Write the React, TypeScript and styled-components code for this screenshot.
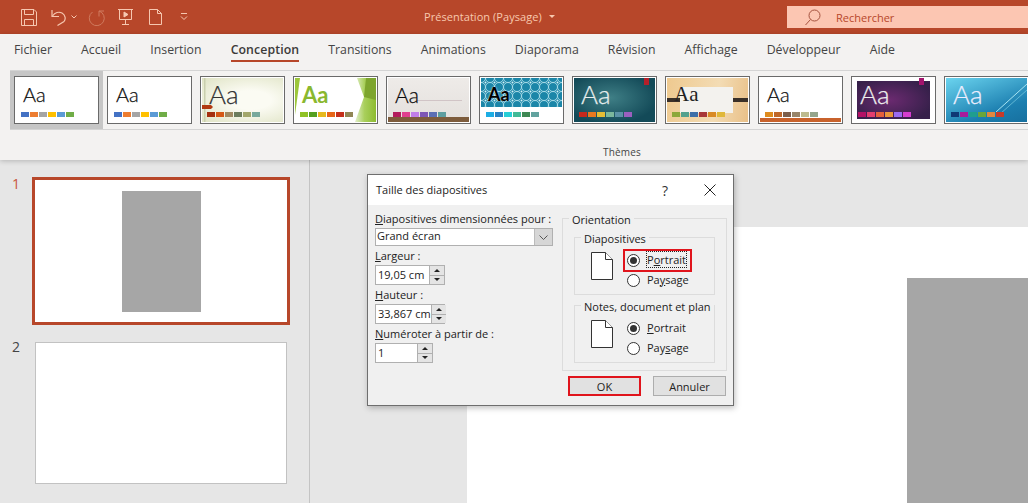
import React from "react";
import styled, { createGlobalStyle } from "styled-components";

const Global = createGlobalStyle`
  html, body { margin: 0; padding: 0; background: #e6e6e6; overflow: hidden; }
  *, *::before, *::after { box-sizing: border-box; }
`;

const FONT = `"Open Sans", "Noto Sans", "Liberation Sans", sans-serif`;

const Page = styled.div`
  position: relative;
  width: 1028px;
  height: 503px;
  overflow: hidden;
  display: flex;
  flex-direction: column;
  font-family: ${FONT};
  background: #e6e6e6;
`;

const TitleBar = styled.header`
  height: 34px;
  flex: none;
  background: #b7472a;
  display: flex;
  align-items: center;
  position: relative;
  padding-left: 21px;
`;
const QuickIcons = styled.div`
  display: flex;
  align-items: center;
  width: 403px;
  flex: none;
`;
const QuickIcon = styled.svg<{ $mr: number }>`
  flex: none;
  margin-right: ${(p) => p.$mr}px;
  fill: none;
  stroke: #f6c7b0;
  stroke-width: 1;
`;
const DocTitle = styled.div`
  width: 363px;
  flex: none;
  display: flex;
  align-items: center;
  gap: 7px;
  padding-bottom: 2px;
  font-size: 11px;
  color: #f8c9ae;
  letter-spacing: 0.05px;
`;
const Caret = styled.span`
  width: 0;
  height: 0;
  border-left: 3px solid transparent;
  border-right: 3px solid transparent;
  border-top: 3px solid #f8c9ae;
`;
const SearchBox = styled.div`
  height: 22px;
  flex: 1;
  background: #fcc6b2;
  display: flex;
  align-items: center;
  padding-left: 18px;
  gap: 15px;
  font-size: 11px;
  color: #b7472a;
`;

const Ribbon = styled.section`
  height: 126px;
  flex: none;
  background: #f3f2f1;
  box-shadow: 0 1px 5px rgba(0, 0, 0, 0.22);
  position: relative;
  z-index: 1;
  display: flex;
  flex-direction: column;
`;
const TabBar = styled.nav`
  height: 36px;
  flex: none;
  display: flex;
  padding-left: 14px;
  gap: 29.1px;
`;
const Tab = styled.div<{ $active?: boolean }>`
  height: 28px;
  padding-top: 6.5px;
  font-size: 12.3px;
  line-height: 18px;
  color: ${(p) => (p.$active ? "#3b3a39" : "#444")};
  font-weight: ${(p) => (p.$active ? 600 : 400)};
  letter-spacing: ${(p) => (p.$active ? "0.1px" : "0")};
  border-bottom: ${(p) => (p.$active ? "2px solid #b7472a" : "0")};
`;
const Gallery = styled.div`
  margin-left: 10px;
  height: 60px;
  flex: none;
  border-top: 1px solid #d4d4d4;
  border-bottom: 1px solid #d4d4d4;
  display: flex;
`;
const ThemeSlot = styled.div<{ $selected?: boolean }>`
  width: 93px;
  flex: none;
  padding: 5px 4px 4px;
  background: ${(p) => (p.$selected ? "#c6c6c6" : "transparent")};
`;
const ThemeCard = styled.div`
  width: 85px;
  height: 48px;
  border: 1px solid #6a6a6a;
  background: #fff;
  padding: 1px;
`;
const Thumb = styled.div<{ $bg: string }>`
  position: relative;
  width: 100%;
  height: 100%;
  background: ${(p) => p.$bg};
  overflow: hidden;
  padding: 3px 0 0 5px;
  display: flex;
  flex-direction: column;
`;
const Aa = styled.div<{ $color: string; $size: number; $serif?: boolean; $bold?: boolean; $halo?: boolean }>`
  position: relative;
  height: 27px;
  margin-left: 2px;
  font-family: ${(p) => (p.$serif ? `"Liberation Serif", serif` : `"Lato", "Noto Sans", sans-serif`)};
  font-size: ${(p) => p.$size}px;
  line-height: 27px;
  font-weight: ${(p) => (p.$bold ? 700 : p.$serif ? 400 : 300)};
  color: ${(p) => p.$color};
  -webkit-text-stroke: ${(p) => (p.$bold || p.$serif ? "0" : "0.25px currentColor")};
  text-shadow: ${(p) => (p.$halo ? "0 0 2px #fff" : "none")};
`;
const Swatches = styled.div`
  position: relative;
  display: flex;
  gap: 1px;
  margin-top: 4px;
`;
const Swatch = styled.span<{ $c: string }>`
  width: 8px;
  height: 5px;
  background: ${(p) => p.$c};
`;
const RibbonGroupLabel = styled.div`
  text-align: center;
  padding: 15px 0 0 216px;
  font-size: 10px;
  line-height: 14px;
  color: #444;
  letter-spacing: 0.2px;
`;

const Workspace = styled.div`
  flex: 1;
  display: flex;
  min-height: 0;
`;
const Sidebar = styled.aside`
  width: 310px;
  flex: none;
  border-right: 1px solid #c4c4c4;
  padding: 17px 0 0 0;
  display: flex;
  flex-direction: column;
  gap: 17px;
`;
const SlideRow = styled.div`
  display: flex;
`;
const SlideNumber = styled.div<{ $active?: boolean }>`
  width: 32px;
  padding-left: 12px;
  margin-top: ${(p) => (p.$active ? 0 : -2)}px;
  font-size: 14px;
  line-height: 14px;
  color: ${(p) => (p.$active ? "#c8553a" : "#444")};
`;
const SlideThumb = styled.div<{ $active?: boolean }>`
  width: ${(p) => (p.$active ? 258 : 252)}px;
  height: ${(p) => (p.$active ? 148 : 142)}px;
  margin-left: ${(p) => (p.$active ? 0 : 3)}px;
  background: #fff;
  border: ${(p) => (p.$active ? "3px solid #b7472a" : "1px solid #c2c2c2")};
  display: flex;
  justify-content: center;
  padding-top: 11px;
  padding-left: 1px;
`;
const ThumbShape = styled.div`
  width: 79px;
  height: 121px;
  background: #a6a6a6;
`;
const Canvas = styled.main`
  flex: 1;
  display: flex;
  padding: 67px 0 0 157px;
`;
const Slide = styled.div`
  flex: 1;
  display: flex;
  background: #fff;
  padding: 51px 0 0 440px;
`;
const SlideShape = styled.div`
  flex: 1;
  background: #a6a6a6;
`;

const Dialog = styled.div`
  position: absolute;
  left: 367px;
  top: 174px;
  width: 367px;
  height: 232px;
  z-index: 2;
  background: #f0f0f0;
  border: 1px solid #6e6e6e;
  box-shadow: 1px 2px 6px rgba(0, 0, 0, 0.25);
  font-size: 11px;
  color: #222;
  display: flex;
  flex-direction: column;
`;
const DialogHeader = styled.div`
  height: 30px;
  flex: none;
  background: #fff;
  display: flex;
  align-items: center;
  padding: 0 17px 0 8px;
`;
const DialogTitle = styled.div`
  flex: 1;
  padding-bottom: 1px;
`;
const Help = styled.div`
  width: 42px;
  font-size: 14px;
  color: #333;
`;
const DialogBody = styled.div`
  flex: 1;
  display: flex;
  padding: 7px 0 0 7px;
`;
const LeftCol = styled.div`
  width: 178px;
  flex: none;
  display: flex;
  flex-direction: column;
`;
const FieldLabel = styled.label`
  display: block;
  height: 16px;
  line-height: 14px;
  white-space: nowrap;
`;
const FieldGap = styled.div`
  height: 3px;
`;
const Select = styled.div`
  height: 18px;
  background: #fff;
  border: 1px solid #b0b0b0;
  display: flex;
  align-items: center;
  padding-left: 1px;
`;
const SelectValue = styled.span`
  flex: 1;
  line-height: 14px;
  padding-bottom: 2px;
`;
const SelectButton = styled.span`
  width: 18px;
  height: 16px;
  background: #d6d6d6;
  border-left: 1px solid #bbb;
  display: flex;
  align-items: center;
  justify-content: center;
`;
const Spin = styled.div<{ $w: number }>`
  width: ${(p) => p.$w}px;
  height: 20px;
  background: #fff;
  border: 1px solid #b0b0b0;
  display: flex;
  align-items: stretch;
  padding-left: 2px;
`;
const SpinValue = styled.span`
  flex: 1;
  line-height: 18px;
  white-space: nowrap;
`;
const SpinButtons = styled.span`
  width: 15px;
  flex: none;
  display: flex;
  flex-direction: column;
  border-left: 1px solid #b0b0b0;
  background: #e4e4e4;
`;
const SpinArrow = styled.span<{ $down?: boolean }>`
  flex: 1;
  display: flex;
  align-items: center;
  justify-content: center;
  border-top: ${(p) => (p.$down ? "1px solid #b0b0b0" : "0")};
  &::after {
    content: "";
    width: 6px;
    height: 3px;
    border-left: 3px solid transparent;
    border-right: 3px solid transparent;
    ${(p) => (p.$down ? "border-top: 3px solid #222;" : "border-bottom: 3px solid #222;")}
  }
`;
const RightCol = styled.div`
  margin-top: 6px;
  margin-left: 9px;
  width: 165px;
  flex: none;
  display: flex;
  flex-direction: column;
`;
const OuterGroup = styled.div`
  position: relative;
  height: 153px;
  border: 1px solid #dcdcdc;
  padding: 18px 11px 0;
  display: flex;
  flex-direction: column;
  gap: 10px;
`;
const Legend = styled.span<{ $left: number }>`
  position: absolute;
  top: -7px;
  left: ${(p) => p.$left}px;
  padding: 0 3px;
  line-height: 15px;
  background: #f0f0f0;
  white-space: nowrap;
`;
const InnerGroup = styled.div`
  position: relative;
  height: 58px;
  flex: none;
  border: 1px solid #dcdcdc;
  display: flex;
  padding: 14px 0 0 16px;
`;
const PageIcon = styled.svg`
  flex: none;
  fill: #fff;
  stroke: #333;
  stroke-width: 1;
`;
const RadioList = styled.div`
  margin-left: 14px;
  margin-top: -2px;
  display: flex;
  flex-direction: column;
`;
const RadioRow = styled.div<{ $highlight?: boolean }>`
  position: relative;
  height: 20px;
  display: flex;
  align-items: center;
  gap: 7px;
  white-space: nowrap;
  &::before {
    content: "";
    display: ${(p) => (p.$highlight ? "block" : "none")};
    position: absolute;
    left: -4px;
    top: -1px;
    width: 69px;
    height: 23px;
    border: 2px solid #e0141c;
  }
`;
const Radio = styled.span<{ $on?: boolean }>`
  width: 13px;
  height: 13px;
  flex: none;
  border-radius: 50%;
  border: 1px solid #333;
  background: #fff;
  display: flex;
  align-items: center;
  justify-content: center;
  &::after {
    content: "";
    display: ${(p) => (p.$on ? "block" : "none")};
    width: 7px;
    height: 7px;
    border-radius: 50%;
    background: #333;
  }
`;
const Focused = styled.span<{ $focus?: boolean }>`
  outline: ${(p) => (p.$focus ? "1px dotted #222" : "0")};
  line-height: 15px;
  margin-bottom: 2px;
`;
const Footer = styled.div`
  position: absolute;
  left: 200px;
  top: 201px;
  display: flex;
  gap: 12px;
`;
const Button = styled.button<{ $primary?: boolean }>`
  width: 73px;
  height: 20px;
  padding: 0;
  font-family: inherit;
  font-size: 11px;
  color: #222;
  background: #e1e1e1;
  border: ${(p) => (p.$primary ? "2px solid #e0141c" : "1px solid #adadad")};
`;

const OFFICE = ["#4472c4", "#ed7d31", "#a5a5a5", "#ffc000", "#5b9bd5", "#70ad47"];

type ThemeDef = {
  bg: string;
  aa: string;
  size: number;
  colors: string[];
  serif?: boolean;
  bold?: boolean;
  halo?: boolean;
  deco?: React.ReactNode;
};

const decoStyle: React.CSSProperties = { position: "absolute", inset: 0 };

const themes: ThemeDef[] = [
  { bg: "#fff", aa: "#111", size: 20, colors: OFFICE },
  { bg: "#fff", aa: "#111", size: 20, colors: OFFICE },
  {
    bg: "radial-gradient(ellipse at 60% 50%, #fbfbf3 30%, #dfe3c4 100%)",
    aa: "#333",
    size: 26,
    colors: ["#a5300f", "#d55816", "#a08a62", "#6b7c5c", "#a2a76b", "#78a99c"],
    deco: (
      <svg viewBox="0 0 81 44" width="81" height="44" style={decoStyle}>
        <path d="M2 0h1.500v44H2z" fill="#c9cfae" />
        <path d="M0 27h9l2 2-2 2H0z" fill="#b23a12" />
      </svg>
    ),
  },
  {
    bg: "#fff",
    aa: "#8ab82f",
    size: 22,
    bold: true,
    colors: ["#90c226", "#54a021", "#e6b91e", "#e76618", "#c42f1a", "#918655"],
    deco: (
      <svg viewBox="0 0 81 44" width="81" height="44" style={decoStyle}>
        <defs>
          <linearGradient id="leaf" x1="0" y1="0" x2="1" y2="0">
            <stop offset="0%" stopColor="#e2efcb" />
            <stop offset="45%" stopColor="#a9cf5c" />
            <stop offset="100%" stopColor="#8cbb30" />
          </linearGradient>
        </defs>
        <path d="M0 0h5L0 37z" fill="#9cc63b" />
        <path d="M62 0L69 19 60 44H81V0z" fill="url(#leaf)" />
        <path d="M71 0H81V22L69 19z" fill="#7da52e" />
      </svg>
    ),
  },
  {
    bg: "linear-gradient(180deg,#eeebe8,#e4e0dd)",
    aa: "#0a0a0a",
    size: 21,
    colors: ["#b31c5c", "#e03f8f", "#c17ee8", "#7e57b5", "#5b6fb5", "#5e9ea0"],
    deco: (
      <svg viewBox="0 0 81 44" width="81" height="44" style={decoStyle}>
        <path d="M29 22h45v.7H29z" fill="#c9b8bc" />
        <path d="M0 39h81v5H0z" fill="#7d5c3c" />
      </svg>
    ),
  },
  {
    bg: "#fff",
    aa: "#000",
    size: 18,
    bold: true,
    halo: true,
    colors: ["#1cade4", "#2683c6", "#27ced7", "#42ba97", "#3e8853", "#62a39f"],
    deco: (
      <svg viewBox="0 0 81 44" width="81" height="44" style={decoStyle}>
        <defs>
          <pattern id="tile" width="9" height="9" patternUnits="userSpaceOnUse">
            <rect width="9" height="9" fill="#1b86a8" />
            <circle cx="0" cy="0" r="4.500" fill="none" stroke="#a8dbe8" strokeWidth=".9" />
            <circle cx="9" cy="0" r="4.500" fill="none" stroke="#a8dbe8" strokeWidth=".9" />
            <circle cx="0" cy="9" r="4.500" fill="none" stroke="#a8dbe8" strokeWidth=".9" />
            <circle cx="9" cy="9" r="4.500" fill="none" stroke="#a8dbe8" strokeWidth=".9" />
            <circle cx="4.500" cy="4.500" r="1" fill="#d6eff5" />
          </pattern>
        </defs>
        <rect width="81" height="29" fill="url(#tile)" />
      </svg>
    ),
  },
  {
    bg: "radial-gradient(ellipse at 45% 45%, #3f7f86 0%, #134a58 75%)",
    aa: "#e8eeee",
    size: 26,
    colors: ["#c5291d", "#e8781f", "#e5bd35", "#7bb79c", "#5b92a6", "#9b5fbf"],
    deco: (
      <svg viewBox="0 0 81 44" width="81" height="44" style={decoStyle}>
        <path d="M70 0h5v7h-5z" fill="#b3202a" />
      </svg>
    ),
  },
  {
    bg: "linear-gradient(100deg,#eec98f,#f3dcb4 60%,#e9c088)",
    aa: "#222",
    size: 21,
    serif: true,
    colors: ["#8ca83a", "#53a18e", "#3d6fa8", "#a93838", "#d98a25", "#e0b83a"],
    deco: (
      <svg viewBox="0 0 81 44" width="81" height="44" style={decoStyle}>
        <rect x="13" y="9" width="53" height="26" fill="#f3f2ee" />
        <path d="M0 20h13v4H0zM66 20h15v4H66z" fill="#3a3028" />
      </svg>
    ),
  },
  {
    bg: "#fff",
    aa: "#111",
    size: 20,
    colors: ["#df8c1f", "#c0682a", "#7c5f4c", "#97856a", "#bdbb8f", "#94a58c"],
    deco: (
      <svg viewBox="0 0 81 44" width="81" height="44" style={decoStyle}>
        <rect y="40" width="81" height="4" fill="#c8622c" />
      </svg>
    ),
  },
  {
    bg: "#fff",
    aa: "#eee",
    size: 26,
    colors: ["#b31166", "#e33d6f", "#e45f3c", "#e9943a", "#9b6bf2", "#d53dd0"],
    deco: (
      <svg viewBox="0 0 81 44" width="81" height="44" style={decoStyle}>
        <defs>
          <radialGradient id="purple" cx="45%" cy="50%" r="60%">
            <stop offset="0%" stopColor="#6b2a70" />
            <stop offset="100%" stopColor="#36204a" />
          </radialGradient>
        </defs>
        <rect x="4" y="3" width="73" height="38" fill="url(#purple)" />
        <rect x="66" y="0" width="5" height="7" fill="#a3146d" />
      </svg>
    ),
  },
  {
    bg: "linear-gradient(160deg,#6bd4ef,#1c7fb0 70%,#17709f)",
    aa: "#eef",
    size: 26,
    colors: ["#0f3875", "#a81b9b", "#1f9e8e", "#6aa63a", "#e08840", "#c83a2a"],
    deco: (
      <svg viewBox="0 0 81 44" width="81" height="44" style={decoStyle}>
        <path d="M50 34L81 6" stroke="#a8e4f2" strokeWidth="1" />
        <path d="M54 36L81 12" stroke="#8ad6ea" strokeWidth=".6" />
      </svg>
    ),
  },
];

const tabs = [
  "Fichier",
  "Accueil",
  "Insertion",
  "Conception",
  "Transitions",
  "Animations",
  "Diaporama",
  "Révision",
  "Affichage",
  "Développeur",
  "Aide",
];

function PageGlyph() {
  return (
    <PageIcon width="22" height="28" viewBox="0 0 22 28">
      <path d="M.5.5h14l7 7v20H.5z" />
      <path d="M14.500.5v7h7" />
    </PageIcon>
  );
}

export default function App() {
  return (
    <Page>
      <Global />
      <TitleBar>
        <QuickIcons>
          <QuickIcon $mr={14} width="16" height="17" viewBox="0 0 16 17">
            <path d="M.5.5h12.500l2.500 2.500v13.500H.5z" />
            <path d="M3.500.5v5h9v-5M3.500 16.500v-6h9v6" />
          </QuickIcon>
          <QuickIcon $mr={4} width="16" height="17" viewBox="0 0 16 17">
            <path d="M1 1v6.500h7" strokeWidth="1.2" />
            <path d="M1.500 7C4 3.500 8 2.500 11 4c3.500 2 4 6 2 8.500L6.500 16.500" strokeWidth="1.2" />
          </QuickIcon>
          <QuickIcon $mr={11} width="6" height="4" viewBox="0 0 6 4">
            <path d="M.5.5L3 3 5.500.5" />
          </QuickIcon>
          <QuickIcon $mr={13} width="17" height="17" viewBox="0 0 17 17" style={{ stroke: "#cf7a5e" }}>
            <path d="M11 2a7.500 7.500 0 1 1-6.500 1M11 2V7.500M11 2H16" />
          </QuickIcon>
          <QuickIcon $mr={16} width="15" height="16" viewBox="0 0 15 16">
            <path d="M0 .5h15M1.500.5v10h12V.5M7.500 10.500v5M4 15.500h7" />
            <path d="M6 3v5l4-2.500z" fill="#f6c7b0" />
          </QuickIcon>
          <QuickIcon $mr={18} width="13" height="16" viewBox="0 0 13 16">
            <path d="M.5.5h8l4 4v11H.5z" />
            <path d="M8.500.5v4h4" />
          </QuickIcon>
          <QuickIcon $mr={0} width="8" height="8" viewBox="0 0 8 8">
            <path d="M1 .5h6M1 3.500L4 6.500 7 3.500" />
          </QuickIcon>
        </QuickIcons>
        <DocTitle>
          Présentation (Paysage)
          <Caret />
        </DocTitle>
        <SearchBox>
          <svg width="16" height="17" viewBox="0 0 16 17" fill="none" stroke="#a5533f" strokeWidth="1">
            <circle cx="9.500" cy="6.500" r="5.500" />
            <path d="M5.500 10.500L.5 16" />
          </svg>
          Rechercher
        </SearchBox>
      </TitleBar>

      <Ribbon>
        <TabBar>
          {tabs.map((t) => (
            <Tab key={t} $active={t === "Conception"}>
              {t}
            </Tab>
          ))}
        </TabBar>
        <Gallery>
          {themes.map((t, i) => (
            <ThemeSlot key={i} $selected={i === 0}>
              <ThemeCard>
                <Thumb $bg={t.bg}>
                  {t.deco}
                  <Aa $color={t.aa} $size={t.size} $serif={t.serif} $bold={t.bold} $halo={t.halo}>
                    Aa
                  </Aa>
                  <Swatches>
                    {t.colors.map((c, j) => (
                      <Swatch key={j} $c={c} />
                    ))}
                  </Swatches>
                </Thumb>
              </ThemeCard>
            </ThemeSlot>
          ))}
        </Gallery>
        <RibbonGroupLabel>Thèmes</RibbonGroupLabel>
      </Ribbon>

      <Workspace>
        <Sidebar>
          <SlideRow>
            <SlideNumber $active>1</SlideNumber>
            <SlideThumb $active>
              <ThumbShape />
            </SlideThumb>
          </SlideRow>
          <SlideRow>
            <SlideNumber>2</SlideNumber>
            <SlideThumb />
          </SlideRow>
        </Sidebar>
        <Canvas>
          <Slide>
            <SlideShape />
          </Slide>
        </Canvas>
      </Workspace>

      <Dialog>
        <DialogHeader>
          <DialogTitle>Taille des diapositives</DialogTitle>
          <Help>?</Help>
          <svg width="12" height="12" viewBox="0 0 12 12" stroke="#222" strokeWidth="1">
            <path d="M.5.5l11 11M11.500.5l-11 11" />
          </svg>
        </DialogHeader>
        <DialogBody>
          <LeftCol>
            <FieldLabel>
              <u>D</u>iapositives dimensionnées pour :
            </FieldLabel>
            <Select>
              <SelectValue>Grand écran</SelectValue>
              <SelectButton>
                <svg width="9" height="5" viewBox="0 0 9 5" fill="none" stroke="#555">
                  <path d="M.5.5l4 4 4-4" />
                </svg>
              </SelectButton>
            </Select>
            <FieldGap />
            <FieldLabel>
              <u>L</u>argeur :
            </FieldLabel>
            <Spin $w={70}>
              <SpinValue>19,05 cm</SpinValue>
              <SpinButtons>
                <SpinArrow />
                <SpinArrow $down />
              </SpinButtons>
            </Spin>
            <FieldGap />
            <FieldLabel>
              <u>H</u>auteur :
            </FieldLabel>
            <Spin $w={70}>
              <SpinValue>33,867 cm</SpinValue>
              <SpinButtons>
                <SpinArrow />
                <SpinArrow $down />
              </SpinButtons>
            </Spin>
            <FieldGap />
            <FieldLabel>
              <u>N</u>uméroter à partir de :
            </FieldLabel>
            <Spin $w={58}>
              <SpinValue>1</SpinValue>
              <SpinButtons>
                <SpinArrow />
                <SpinArrow $down />
              </SpinButtons>
            </Spin>
          </LeftCol>
          <RightCol>
            <OuterGroup>
              <Legend $left={6}>Orientation</Legend>
              <InnerGroup>
                <Legend $left={6}>Diapositives</Legend>
                <PageGlyph />
                <RadioList>
                  <RadioRow $highlight>
                    <Radio $on />
                    <Focused $focus>
                      P<u>o</u>rtrait
                    </Focused>
                  </RadioRow>
                  <RadioRow>
                    <Radio />
                    <Focused>
                      Pa<u>y</u>sage
                    </Focused>
                  </RadioRow>
                </RadioList>
              </InnerGroup>
              <InnerGroup>
                <Legend $left={6}>Notes, document et plan</Legend>
                <PageGlyph />
                <RadioList>
                  <RadioRow>
                    <Radio $on />
                    <Focused>
                      <u>P</u>ortrait
                    </Focused>
                  </RadioRow>
                  <RadioRow>
                    <Radio />
                    <Focused>
                      Pay<u>s</u>age
                    </Focused>
                  </RadioRow>
                </RadioList>
              </InnerGroup>
            </OuterGroup>
          </RightCol>
        </DialogBody>
        <Footer>
          <Button $primary>OK</Button>
          <Button>Annuler</Button>
        </Footer>
      </Dialog>
    </Page>
  );
}
